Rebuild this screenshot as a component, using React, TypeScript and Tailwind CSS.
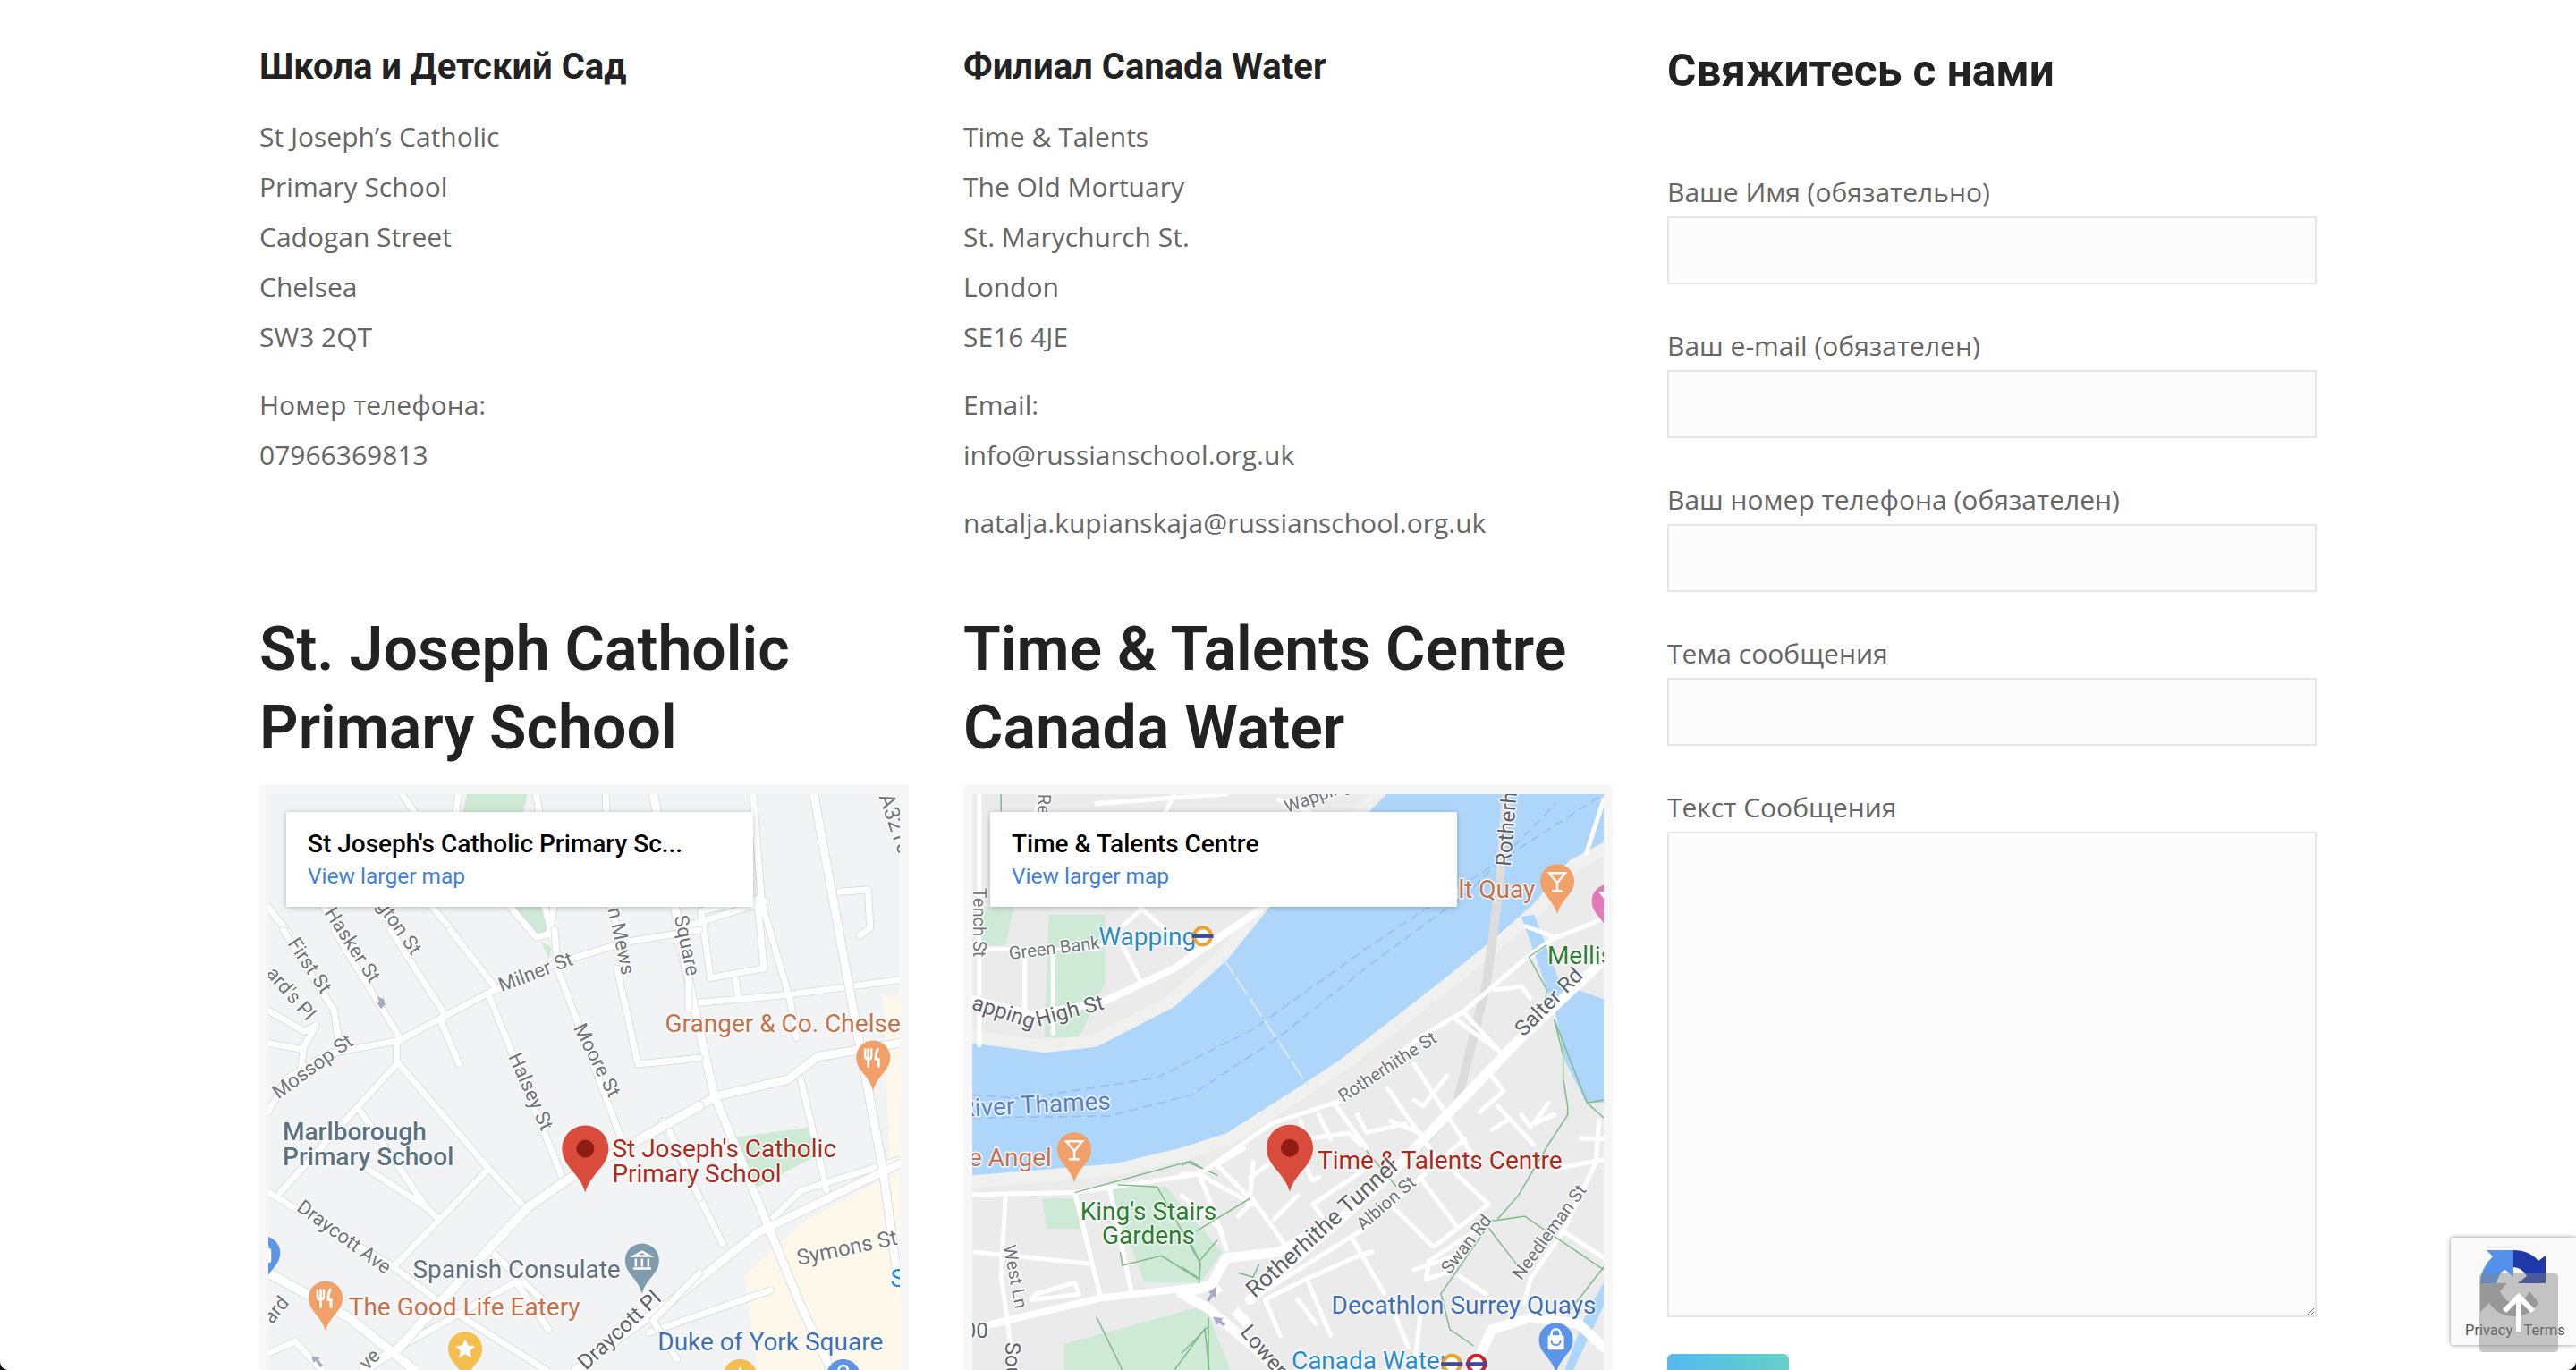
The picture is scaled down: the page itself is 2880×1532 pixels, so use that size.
const toX = 0.4847;
const toY = 0.4286;

type LabelProps = {
  ox: number;
  x: number;
  y: number;
  rot?: number;
  size?: number;
  color?: string;
  weight?: number;
  anchor?: 'start' | 'middle' | 'end';
  children: string;
};

// x / y are read off the reference crops, scaled back to real pixels here
function Label({ ox, x, y, rot = 0, size = 28, color = '#70757a', weight = 400, anchor = 'start', children }: LabelProps) {
  const px = x * toX - ox;
  const py = y * toY - 28;
  return (
    <text
      x={px}
      y={py}
      transform={rot ? `rotate(${rot} ${px} ${py})` : undefined}
      fontSize={size}
      fontWeight={weight}
      fill={color}
      textAnchor={anchor}
      stroke="#ffffff"
      strokeWidth={3}
      strokeOpacity={0.8}
      strokeLinejoin="round"
      paintOrder="stroke"
      className="font-['Roboto']"
    >
      {children}
    </text>
  );
}

function Roads({ items, width, casing = true }: { items: string[]; width: number; casing?: boolean }) {
  return (
    <g fill="none" strokeLinecap="round" strokeLinejoin="round">
      {casing &&
        items.map((d) => (
          <path key={`c${d}`} d={d} stroke="#dcdee2" strokeWidth={width + 2} vectorEffect="non-scaling-stroke" />
        ))}
      {items.map((d) => (
        <path key={d} d={d} stroke="#ffffff" strokeWidth={width} vectorEffect="non-scaling-stroke" />
      ))}
    </g>
  );
}

function BigPin({ ox, x, top }: { ox: number; x: number; top: number }) {
  const px = x * toX - ox;
  const py = top * toY - 28;
  return (
    <g transform={`translate(${px - 26} ${py})`}>
      <path d="M26 0C11.6 0 0 11.6 0 26c0 20 20 27 26 49 6-22 26-29 26-49C52 11.6 40.4 0 26 0z" fill="#d94b3b" />
      <ellipse cx="26" cy="26" rx="10" ry="10" fill="#8f1d14" />
    </g>
  );
}

function Poi({ ox, x, top, color, kind }: { ox: number; x: number; top: number; color: string; kind: string }) {
  const px = x * toX - ox;
  const py = top * toY - 28;
  return (
    <g transform={`translate(${px - 19} ${py})`}>
      <path d="M19 0C8.5 0 0 8.5 0 19c0 15 14 19 19 37 5-18 19-22 19-37C38 8.500 29.500 0 19 0z" fill={color} />
      {kind === 'fork' && (
        <g stroke="#fff" fill="none" strokeWidth="2.500">
          <path d="M10 9v8c0 3 2 4 3.500 4s3.500-1 3.500-4V9M13.500 9v21" />
          <path d="M25 9c-3 2-3 8-3 12h3v9" strokeWidth="3" />
        </g>
      )}
      {kind === 'bar' && (
        <g stroke="#fff" fill="none" strokeWidth="2.500">
          <path d="M10 10h18l-9 11zM19 21v9M13 30h12" />
        </g>
      )}
      {kind === 'museum' && (
        <g stroke="#fff" fill="none" strokeWidth="2.500">
          <path d="M10 14l9-5 9 5zM12 17v9M19 17v9M26 17v9M9 28h20" />
        </g>
      )}
      {kind === 'star' && <path d="M19 8l3.400 7.300 7.600.8-5.700 5.200 1.700 7.700-7-4-7 4 1.700-7.700L8 16.100l7.600-.8z" fill="#fff" />}
      {kind === 'bag' && (
        <g>
          <rect x="10" y="14" width="18" height="16" rx="2" fill="#fff" />
          <path d="M14 17v-5a5 5 0 0 1 10 0v5" stroke="#fff" strokeWidth="2.500" fill="none" />
          <path d="M14 20a5 5 0 0 0 10 0" stroke={color} strokeWidth="2" fill="none" />
        </g>
      )}
    </g>
  );
}

function Roundel({ ox, x, y, color }: { ox: number; x: number; y: number; color: string }) {
  const px = x * toX - ox;
  const py = y * toY - 28;
  return (
    <g>
      <circle cx={px} cy={py} r="9.500" fill="#fff" stroke={color} strokeWidth="4" />
      <rect x={px - 12} y={py - 2} width="24" height="4" fill="#3b4a9c" />
    </g>
  );
}

function MapCard({ title }: { title: string }) {
  return (
    <div className="absolute left-[30px] top-[30px] w-[522px] h-[106px] bg-white rounded-[2px] shadow-[0_1px_6px_rgba(0,0,0,0.25)] pl-[24px] pt-[18px] font-['Roboto']">
      <div className="text-[28px] leading-[36px] font-medium text-black">{title}</div>
      <div className="text-[24.500px] leading-[36px] text-[#3f7fdc]">View larger map</div>
    </div>
  );
}

function ChelseaMap() {
  // upper and right part, in the coordinates of the wide crop
  const wide = [
    'M1518 715L1330 750L1260 810L1090 855L1056 880',
    'M770 1568L1000 1380L1190 1210L1480 1050L1518 1030',
    'M1320 65L1400 560L1480 1050L1510 1300',
    'M950 65L1040 600L1090 850L1290 1400L1360 1568',
  ];
  const thin = [
    'M1000 420L1210 345',
    'M190 360L240 450',
    'M320 350L360 430',
    'M440 360L500 440',
    'M700 360L720 450',
    'M840 65L850 360L870 420',
    'M1180 65L1200 350L1265 600L1280 700',
    'M1050 610L1250 590L1518 550',
    'M500 65L495 115',
    'M680 65L720 360L710 430',
    'M370 65L400 115',
    'M620 360L680 440L710 430',
    'M62 360L110 430',
    'M1290 810L1350 1100',
    'M1190 1210L1290 1100L1518 1020',
    'M1080 530L1060 370L1190 340L1205 520L1080 545',
    'M1140 550L1145 590',
    'M1380 320L1445 315L1450 415L1425 435',
    'M940 1470L1220 1360',
    'M1110 1240L970 920',
    'M1000 420L1040 600',
  ];
  // lower left part, in the coordinates of the square crop
  const nearWide = [
    'M1476 590L1030 840L900 930L760 1080L470 1400L350 1476',
    'M30 1150L300 1300L520 1476',
  ];
  const nearThin = [
    'M30 610L90 500L230 415L470 370L770 210L1000 110L1230 40L1476 0',
    'M80 0L250 270L270 400',
    'M250 0L470 360',
    'M440 0L620 280L610 310L670 450',
    'M640 0L790 190',
    'M990 0L1000 130L1210 690',
    'M770 220L1020 840',
    'M460 440L760 790L890 930',
    'M460 440V380',
    'M460 450L70 880',
    'M30 880L450 1130L620 1260L960 1476',
    'M760 810L450 1130',
    'M1200 130L1270 450L1476 430',
    'M340 610L560 930L600 970',
    'M360 800L560 930',
    'M780 1080L1000 1290',
    'M470 1400L860 1180L970 1340',
    'M30 270L150 340L190 320L150 390L140 460',
    'M30 380L140 400',
    'M120 1380L210 1476',
    'M30 1420L120 1380',
    'M1360 640L1476 900',
    'M1440 130V260',
    'M1476 1150L1320 1310L1400 1440',
  ];
  return (
    <svg viewBox="0 0 706 644" className="block w-[706px] h-[644px] bg-[#f1f3f4]">
      <g transform="translate(-30 -28) scale(0.4847 0.4286)">
        <path d="M520 65H660L650 115H510zM620 360H700L710 425L665 430zM690 450L715 465L710 495z" fill="#ceead6" />
        <path d="M1140 960L1310 935L1340 1000L1175 1100z" fill="#ceead6" />
        <path d="M1480 590H1518V1060H1495zM1310 1170L1480 1070L1518 1060V1568H1190L1160 1320z" fill="#fdf8ea" />
        <Roads items={thin} width={7} />
        <Roads items={wide} width={9} />
      </g>
      <g transform="translate(-10 152) scale(0.33333)">
        <Roads items={nearThin} width={7} />
        <Roads items={nearWide} width={10} />
        <path d="M395 222l20 10-1 -12 8 30-14 15-16-24 11 3z" fill="#a6abc4" />
        <path d="M175 1430l30 4-8 6 16 22-8 6-16-22-8 6z" fill="#a6abc4" />
      </g>
      <Label ox={30} x={855} y={1012} color="#ad2a1c">St Joseph's Catholic</Label>
      <Label ox={30} x={855} y={1078} color="#ad2a1c">Primary School</Label>
      <Label ox={30} x={95} y={968} color="#5b7283" weight={500}>Marlborough</Label>
      <Label ox={30} x={95} y={1033} color="#5b7283" weight={500}>Primary School</Label>
      <Label ox={30} x={977} y={685} color="#c5734d">Granger &amp; Co. Chelsea</Label>
      <Label ox={30} x={247} y={1425} color="#c5734d">The Good Life Eatery</Label>
      <Label ox={30} x={395} y={1328} color="#5f7080">Spanish Consulate</Label>
      <Label ox={30} x={960} y={1517} color="#3f6fb5">Duke of York Square</Label>
      <Label ox={30} x={1497} y={1350} color="#1a8ccf">S</Label>
      <Label ox={30} x={600} y={582} rot={-21} size={22}>Milner St</Label>
      <Label ox={30} x={85} y={862} rot={-36} size={22}>Mossop St</Label>
      <Label ox={30} x={1285} y={1295} rot={-12} size={24}>Symons St</Label>
      <Label ox={30} x={125} y={1150} rot={36} size={22}>Draycott Ave</Label>
      <Label ox={30} x={765} y={675} rot={63} size={22}>Moore St</Label>
      <Label ox={30} x={615} y={750} rot={66} size={22}>Halsey St</Label>
      <Label ox={30} x={190} y={375} rot={57} size={22}>Hasker St</Label>
      <Label ox={30} x={310} y={355} rot={55} size={22}>gton St</Label>
      <Label ox={30} x={105} y={455} rot={56} size={22}>First St</Label>
      <Label ox={30} x={55} y={535} rot={49} size={22}>ard's Pl</Label>
      <Label ox={30} x={845} y={365} rot={78} size={22}>n Mews</Label>
      <Label ox={30} x={998} y={385} rot={78} size={22}>Square</Label>
      <Label ox={30} x={1470} y={72} rot={71} size={24}>A3216</Label>
      <Label ox={30} x={795} y={1570} rot={-43} size={24} color="#5f6368">Draycott Pl</Label>
      <Label ox={30} x={70} y={1450} rot={-50} size={22}>ard</Label>
      <Label ox={30} x={290} y={1570} rot={-45} size={22}>ve</Label>
      <BigPin ox={30} x={793} top={930} />
      <Poi ox={30} x={1457} top={708} color="#f2a06a" kind="fork" />
      <Poi ox={30} x={194} top={1336} color="#f2a06a" kind="fork" />
      <Poi ox={30} x={924} top={1238} color="#7f9cae" kind="museum" />
      <Poi ox={30} x={516} top={1468} color="#f4bf4f" kind="star" />
      <Poi ox={30} x={50} top={1218} color="#5c94e8" kind="bag" />
      <Poi ox={30} x={1388} top={1540} color="#5c94e8" kind="bag" />
      <Poi ox={30} x={1150} top={1540} color="#f4bf4f" kind="star" />
    </svg>
  );
}

function CanadaWaterMap() {
  const wide = [
    'M54 1460L350 1380L580 1350',
    'M54 600L190 640L350 610L520 520L700 380L760 330',
  ];
  const thin = [
    'M620 1030L680 990',
    'M54 1110L290 1105L350 1380',
    'M290 1105L560 1060L620 1030',
    'M370 1090L420 1360',
    'M70 65L70 720',
    'M70 470L340 470',
    'M175 470L175 650',
    'M240 470L240 690',
    'M340 470L440 370',
    'M400 460L440 550',
    'M440 360L560 480',
    'M130 1120L120 1320L150 1568',
    'M60 1260L320 1290',
    'M200 1370L290 1340L300 1370L190 1385z',
    'M1510 80L1470 220',
    'M220 65L200 110',
    'M340 90L640 65',
    'M520 65L500 110',
    'M760 80L830 110',
    'M1370 460L1340 490',
    'M1400 440L1510 390',
    'M1330 410L1400 440',
  ];
  const rail = [
    'M290 1105L550 1025L620 1060',
    'M390 1085L480 1090L580 1290L575 1360',
    'M395 1260L400 1295L490 1270L575 1330',
    'M120 65V110',
    'M340 1430L400 1568',
    'M520 1568L590 1460L600 1568',
  ];
  // lower right part, in the coordinates of the square crop
  const nearWide = [
    'M230 1240L690 830L1130 370L1416 100',
    'M0 1220L100 1190L150 1100L330 1080L480 990',
    'M100 1190L220 1320',
    'M90 1270L330 1476',
    'M0 1220L90 1270',
    'M980 1476L1040 1340L1170 1300L1330 1320L1416 1400',
  ];
  const nearThin = [
    'M0 820L60 820L300 650L540 570L800 360L950 270L1160 90L1260 20',
    'M230 1240L600 1010L950 700',
    'M510 580L620 730',
    'M590 620L620 680L750 650',
    'M700 640L800 680',
    'M690 530L880 800',
    'M780 450L1000 790',
    'M920 300L1070 410',
    'M780 570L810 590L890 490',
    'M1040 490L1080 540L1000 610',
    'M1060 590L1180 720',
    'M1230 580L1180 650L1250 620',
    'M1140 620L1170 660',
    'M1040 670L1090 640',
    'M800 830L920 990',
    'M880 780L1030 920L850 1060',
    'M710 930L840 1060',
    'M570 1030L680 1220',
    'M640 1080L600 1090L420 1170L500 1360',
    'M390 1240L450 1320',
    'M280 1240L330 1360',
    'M420 1170L280 1240',
    'M830 1110L1000 1000',
    'M830 1110L820 1170L890 1150',
    'M780 1140L960 1080',
    'M930 1160L1020 1220',
    'M240 780L230 890L350 1060',
    'M230 830L300 780',
    'M310 970L390 890',
    'M440 920L620 800',
    'M440 920L470 960',
    'M420 800L440 840L460 830',
    'M60 820L240 920',
    'M120 790L220 890',
    'M60 820L110 950L150 1070',
    'M190 960L230 920',
    'M1416 770L1260 800',
    'M1400 640L1390 780L1280 1010L1170 1170L1150 1250',
    'M1340 700H1416',
    'M1280 1010L1416 1100',
    'M1050 200L1140 190L1170 230',
    'M950 280L1060 400',
    'M430 700L560 680L600 720',
    'M400 640L420 730',
    'M460 620L500 700',
    'M0 890L130 1000L150 1070',
    'M800 1300L780 1476',
    'M720 1300L760 1400',
  ];
  const nearRail = [
    'M0 790L30 775L70 800',
    'M1165 90L1225 200L1220 240',
    'M1250 300L1280 420L1280 500L1295 590L1295 620L1230 720L1130 890L1060 970',
    'M1250 300L1360 580L1416 630',
    'M1360 580L1416 570',
    'M1000 970L1050 975L1150 960L1416 1140',
    'M1030 1000L1130 1130',
    'M1040 975L870 1220L900 1340L980 1395',
    'M1416 1130L1300 1280',
    'M0 1130L60 1170L60 1110L120 1040',
    'M60 1110L30 1050',
    'M230 900L50 1010',
    'M1165 90L1225 50',
    'M620 740L720 860',
    'M90 1300L90 1476',
    'M0 1420L90 1330',
    'M190 1150L240 1165L260 1120',
  ];
  return (
    <svg viewBox="0 0 706 644" className="block w-[706px] h-[644px] bg-[#ebebeb]">
      <g transform="translate(-26 -28) scale(0.4847 0.4286)">
        <path d="M54 360H150L130 460H70zM230 380H360V560L300 700H220z" fill="#ceead6" />
        <path d="M215 1120H290L310 1200H225zM370 1090L500 1090L630 1260L580 1340L450 1340zM265 1500L590 1400L650 1568H265z" fill="#ceead6" />
        <path d="M54 715L220 740L340 725L520 620L640 500L740 360L970 110L1010 65H1510V190L1430 240L1350 350L1250 450L1150 540L1060 620L900 760L820 820L640 950L530 990L380 1030L54 1060z" fill="#aed6fb" stroke="#f0f0ef" strokeWidth="28" vectorEffect="non-scaling-stroke" paintOrder="stroke" />
        <path d="M1320 385L1350 380L1410 560L1510 600V870L1470 870L1420 760L1400 640z" fill="#aed6fb" />
        <path d="M1470 1420L1510 1340V1400L1440 1568H1420z" fill="#aed6fb" />
        <g fill="none" stroke="#95bdf0" strokeWidth="1.500" strokeDasharray="10 6">
          <path d="M54 850L170 860L480 805L700 680L960 470L1120 350L1510 65" vectorEffect="non-scaling-stroke" />
          <path d="M54 910L370 905L560 850L760 700L960 520L1200 320L1400 90" vectorEffect="non-scaling-stroke" />
        </g>
        <path d="M630 490L830 830" fill="none" stroke="#dceafc" strokeWidth="2" strokeDasharray="24 4" vectorEffect="non-scaling-stroke" />
        <path d="M1285 65L1270 300L1240 560L1170 880L1080 990" fill="none" stroke="#dcdcdc" strokeWidth="10" vectorEffect="non-scaling-stroke" />
        <Roads items={thin} width={5} casing={false} />
        <Roads items={wide} width={8} casing={false} />
        <g fill="none" stroke="#7fbb8a" strokeWidth="1.500">
          {rail.map((d) => (
            <path key={d} d={d} vectorEffect="non-scaling-stroke" />
          ))}
        </g>
      </g>
      <g transform="translate(234 152) scale(0.33333)">
        <Roads items={nearThin} width={5} casing={false} />
        <Roads items={nearWide} width={11} casing={false} />
        <g fill="none" stroke="#7fbb8a" strokeWidth="1.500">
          {nearRail.map((d) => (
            <path key={d} d={d} vectorEffect="non-scaling-stroke" />
          ))}
        </g>
        <circle cx="150" cy="1250" r="40" fill="#ebebeb" />
        <path d="M118 1195l-4 38-8-6-14 20-8-6 14-20-8-6z" fill="#a6abc4" />
        <path d="M105 1298l34 4-6 8 14 12-6 8-16-12-6 6z" fill="#a6abc4" />
      </g>
      <Label ox={26} x={850} y={1042} color="#ad2a1c">Time &amp; Talents Centre</Label>
      <Label ox={26} x={345} y={460} color="#2a8cca">Wapping</Label>
      <Label ox={26} x={140} y={497} rot={-7} size={20}>Green Bank</Label>
      <Label ox={26} x={50} y={625} rot={18} size={24} color="#5f6368">apping</Label>
      <Label ox={26} x={205} y={672} rot={-15} size={24} color="#5f6368">High St</Label>
      <Label ox={26} x={25} y={908} rot={-3} color="#5a80c0">River Thames</Label>
      <Label ox={26} x={237} y={1037} anchor="end" color="#c5734d">The Angel</Label>
      <Label ox={26} x={1352} y={337} anchor="end" color="#c5734d">Salt Quay</Label>
      <Label ox={26} x={1380} y={508} color="#2e7d32">Mellish Fields</Label>
      <Label ox={26} x={1295} y={255} rot={-85} size={24} color="#5f6368">Rotherhithe</Label>
      <Label ox={26} x={1325} y={700} rot={-45} size={24} color="#5f6368">Salter Rd</Label>
      <Label ox={26} x={910} y={870} rot={-33} size={20}>Rotherhithe St</Label>
      <Label ox={26} x={705} y={1382} rot={-42} size={26} color="#5f6368">Rotherhithe Tunnel</Label>
      <Label ox={26} x={955} y={1205} rot={-41} size={20}>Albion St</Label>
      <Label ox={26} x={1155} y={1320} rot={-52} size={20}>Swan Rd</Label>
      <Label ox={26} x={1320} y={1335} rot={-54} size={20}>Needleman St</Label>
      <Label ox={26} x={460} y={1175} anchor="middle" color="#2e7d32">King's Stairs</Label>
      <Label ox={26} x={460} y={1240} anchor="middle" color="#2e7d32">Gardens</Label>
      <Label ox={26} x={882} y={1420} color="#3f6fb5">Decathlon Surrey Quays</Label>
      <Label ox={26} x={790} y={1566} color="#2a8cca">Canada Water</Label>
      <Label ox={26} x={125} y={1245} rot={79} size={20}>West Ln</Label>
      <Label ox={26} x={670} y={1470} rot={50} size={24} color="#5f6368">Lower Rd</Label>
      <Label ox={26} x={130} y={1495} rot={90} size={24} color="#5f6368">Southwark</Label>
      <Label ox={26} x={90} y={1483} anchor="end" size={24} color="#5f6368">A200</Label>
      <Label ox={26} x={55} y={310} rot={90} size={20}>Tench St</Label>
      <Label ox={26} x={780} y={115} rot={-20} size={20}>Wapping</Label>
      <Label ox={26} x={205} y={65} rot={90} size={20}>Reardon</Label>
      <BigPin ox={26} x={786} top={928} />
      <Roundel ox={26} x={585} y={436} color="#e9a52f" />
      <Roundel ox={26} x={1160} y={1552} color="#e9a52f" />
      <Roundel ox={26} x={1217} y={1552} color="#c8242b" />
      <Poi ox={26} x={289} top={948} color="#f2a06a" kind="bar" />
      <Poi ox={26} x={1403} top={248} color="#f2a06a" kind="bar" />
      <Poi ox={26} x={1400} top={1445} color="#5c94e8" kind="bag" />
      <Poi ox={26} x={1522} top={300} color="#e27ab8" kind="bar" />
    </svg>
  );
}

function Field({ label }: { label: string }) {
  return (
    <div className="mb-[40px]">
      <label className="block h-[56px] leading-[58px]">{label}</label>
      <input className="block w-full h-[76px] border-2 border-[#e6e6e6] bg-[#fcfcfc]" />
    </div>
  );
}

function RecaptchaBadge() {
  return (
    <div className="absolute right-0 top-[1384px] w-[140px] h-[120px] bg-[#f9f9f9] rounded-l-[3px] shadow-[0_0_5px_rgba(0,0,0,0.45)] font-['Roboto']">
      <svg viewBox="0 0 74 76" className="absolute left-[33px] top-[13px] w-[74px] h-[76px]">
        <path d="M7 1H37V31L28 23Q22 24 18 38H0Q0 22 14 8z" fill="#5591ea" />
        <path d="M37 1Q55 1 65 13L73 7V38H42L52 30Q46 20 37 20z" fill="#1f3aa8" />
        <path d="M0 38H30L22 47Q28 60 38 60Q48 60 55 47L65 60Q55 75 38 75Q20 75 10 60L0 70z" fill="#ababab" />
      </svg>
      <div className="absolute left-[16px] top-[94px] w-[115px] text-[16.500px] leading-[20px] text-[#555] whitespace-nowrap">Privacy · Terms</div>
    </div>
  );
}

export default function App() {
  return (
    <div className="relative h-screen overflow-hidden bg-white text-[#666666] font-['Open_Sans'] text-[30px] leading-[56px]">
      <div className="flex gap-x-[61px] pl-[290px]">
        {/* Left two columns */}
        <div className="w-[1513px] grid grid-cols-[726px_726px] gap-x-[61px] content-start">
          <div className="pt-[48px]">
            <h4 className="font-['Roboto'] font-bold text-[#222222] text-[40px] leading-[54px] mb-[23px]">Школа и Детский Сад</h4>
            <p>
              St Joseph’s Catholic<br />Primary School<br />Cadogan Street<br />Chelsea<br />SW3 2QT
            </p>
            <p className="mt-[20px]">
              Номер телефона:<br />07966369813
            </p>
          </div>
          <div className="pt-[48px]">
            <h4 className="font-['Roboto'] font-bold text-[#222222] text-[40px] leading-[54px] mb-[23px]">Филиал Canada Water</h4>
            <p>
              Time &amp; Talents<br />The Old Mortuary<br />St. Marychurch St.<br />London<br />SE16 4JE
            </p>
            <p className="mt-[20px]">
              Email:<br />info@russianschool.org.uk
            </p>
            <p className="mt-[20px]">natalja.kupianskaja@russianschool.org.uk</p>
          </div>
          <div className="mt-[69px]">
            <h2 className="font-['Roboto'] font-semibold text-[#222222] text-[68px] leading-[88px] mb-[20px]">
              St. Joseph Catholic<br />Primary School
            </h2>
            <div className="relative bg-[#f7f7f7] p-[10px] pb-0">
              <ChelseaMap />
              <MapCard title="St Joseph's Catholic Primary Sc..." />
            </div>
          </div>
          <div className="mt-[69px]">
            <h2 className="font-['Roboto'] font-semibold text-[#222222] text-[68px] leading-[88px] mb-[20px]">
              Time &amp; Talents Centre<br />Canada Water
            </h2>
            <div className="relative bg-[#f7f7f7] p-[10px] pb-0">
              <CanadaWaterMap />
              <MapCard title="Time & Talents Centre" />
            </div>
          </div>
        </div>

        {/* Contact form */}
        <div className="w-[726px]">
          <h3 className="font-['Roboto'] font-bold text-[#222222] text-[49.500px] leading-[64px] mt-[47px] mb-[75px]">Свяжитесь с нами</h3>
          <Field label="Ваше Имя (обязательно)" />
          <Field label="Ваш e-mail (обязателен)" />
          <Field label="Ваш номер телефона (обязателен)" />
          <Field label="Тема сообщения" />
          <label className="block h-[56px] leading-[58px]">Текст Сообщения</label>
          <textarea className="block w-full h-[543px] border-2 border-[#e6e6e6] bg-[#fcfcfc]" />
          <div className="mt-[41px] w-[136px] h-[60px] rounded-[6px] bg-gradient-to-r from-[#56b8ee] to-[#66cfc8]" />
        </div>
      </div>

      <RecaptchaBadge />
      {/* Back to top */}
      <div className="absolute left-[2772px] top-[1424px] w-[88px] h-[88px] rounded-[4px] bg-[#808080]/45 flex items-center justify-center">
        <svg viewBox="0 0 88 88" className="w-[88px] h-[88px]">
          <path d="M44 65V27M28 42l16-16 16 16" fill="none" stroke="#fff" strokeWidth="6" />
        </svg>
      </div>
      {/* rounded window corners of the capture */}
      <svg viewBox="0 0 10 10" className="absolute right-0 bottom-0 w-[10px] h-[10px]">
        <path d="M10 0v10H0c6 0 10-4 10-10z" fill="#111" />
      </svg>
      <svg viewBox="0 0 10 10" className="absolute left-0 bottom-0 w-[10px] h-[10px]">
        <path d="M0 0v10h10C4 10 0 6 0 0z" fill="#111" />
      </svg>
    </div>
  );
}
